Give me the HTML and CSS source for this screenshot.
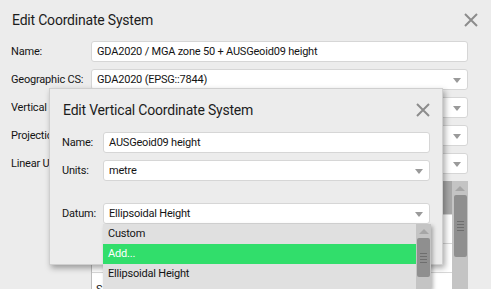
FILE: index.html
```html
<!DOCTYPE html>
<html lang="en">
<head>
    <meta charset="UTF-8">
    <title>Edit Coordinate System</title>
    <link rel="stylesheet" href="styles.css">
</head>
<body>
    <div class="dialog">
        <div class="dlg-head">
            <span class="dlg-title">Edit Coordinate System</span>
            <svg class="close" width="14" height="14" viewBox="0 0 14 14"><path d="M1 1L13 13M13 1L1 13"/></svg>
        </div>
        <div class="form">
            <div class="row"><label>Name:</label><div class="field">GDA2020 / MGA zone 50 + AUSGeoid09 height</div></div>
            <div class="row"><label>Geographic CS:</label><div class="field combo">GDA2020 (EPSG::7844)<span class="arrow"></span></div></div>
            <div class="row"><label class="covered">Vertical CS:</label><div class="field combo"><span class="arrow"></span></div></div>
            <div class="row"><label class="covered">Projection:</label><div class="field combo"><span class="arrow"></span></div></div>
            <div class="row"><label class="covered">Linear Units:</label><div class="field combo"><span class="arrow"></span></div></div>
        </div>
        <div class="listbox">
            <div class="list-rows">
                <div class="lrow sel"></div>
                <div class="lrow"></div>
                <div class="lrow"></div>
                <div class="lrow">S</div>
            </div>
            <div class="vscroll big">
                <span class="up"></span>
                <div class="thumb"><i></i><i></i><i></i><i></i></div>
            </div>
        </div>
    </div>

    <div class="dialog inner">
        <div class="dlg-head">
            <span class="dlg-title">Edit Vertical Coordinate System</span>
            <svg class="close" width="14" height="14" viewBox="0 0 14 14"><path d="M1 1L13 13M13 1L1 13"/></svg>
        </div>
        <div class="form">
            <div class="row"><label>Name:</label><div class="field">AUSGeoid09 height</div></div>
            <div class="row"><label>Units:</label><div class="field combo">metre<span class="arrow"></span></div></div>
            <div class="row datum"><label>Datum:</label><div class="field combo">Ellipsoidal Height<span class="arrow"></span></div></div>
        </div>
    </div>

    <div class="popup">
        <div class="items">
            <div class="item">Custom</div>
            <div class="item hi">Add...</div>
            <div class="item">Ellipsoidal Height</div>
        </div>
        <div class="vscroll">
            <span class="up"></span>
            <div class="thumb"><i></i><i></i><i></i><i></i></div>
        </div>
    </div>
</body>
</html>
```

FILE: styles.css
```css
body {
    margin: 0;
    background-color: #ececec;
    font-family: Roboto, "Noto Sans", sans-serif;
    font-size: 11px;
    letter-spacing: -0.2px;
    color: #141414;
    overflow: hidden;
    height: 289px;
    position: relative;
}
.dialog {
    padding: 0 23px 0 11px;
}
.dlg-head {
    display: flex;
    align-items: center;
    justify-content: space-between;
    height: 40px;
}
.dlg-title {
    font-size: 14px;
    letter-spacing: -0.2px;
    padding-left: 1px;
    color: #1c1c1c;
}
.close {
    margin-right: -10px;
}
.close path {
    stroke: #8c8c8c;
    stroke-width: 2;
    fill: none;
}
.form {
    display: flex;
    flex-direction: column;
    gap: 7px;
    margin-top: 1px;
}
.row {
    display: flex;
    align-items: center;
    height: 21px;
}
.row label {
    width: 80px;
    flex: none;
    white-space: nowrap;
}
.row label.covered {
    width: 38px;
    margin-right: 42px;
    overflow: hidden;
}
.field {
    flex: 1;
    height: 19px;
    line-height: 19px;
    background: #fff;
    border: 1px solid #d6d6d6;
    border-radius: 3px;
    padding-left: 5px;
    position: relative;
    white-space: nowrap;
}
.arrow {
    position: absolute;
    right: 6px;
    top: 8px;
    border-left: 4px solid transparent;
    border-right: 4px solid transparent;
    border-top: 5px solid #9a9a9a;
}
.listbox {
    display: flex;
    margin: 7px 0 0 80px;
    height: 108px;
    background: #fff;
    border-left: 1px solid #bdbdbd;
}
.list-rows {
    flex: 1;
}
.lrow {
    height: 29px;
    border-bottom: 1px solid #d8d8d8;
    padding: 10px 0 0 4px;
    box-sizing: border-box;
}
.lrow.sel {
    height: 34px;
    background: #a8a8a8;
}
.lrow:last-child {
    height: 15px;
    border-bottom: none;
}
.vscroll {
    width: 16px;
    background: #c4c4c4;
    display: flex;
    flex-direction: column;
    align-items: center;
}
.up {
    margin-top: 5px;
    border-left: 5px solid transparent;
    border-right: 5px solid transparent;
    border-bottom: 5px solid #a6a6a6;
}
.thumb {
    width: 13px;
    background: #8f8f8f;
    border-radius: 2px;
    margin-top: 4px;
    display: flex;
    flex-direction: column;
    align-items: center;
    justify-content: center;
    gap: 2px;
}
.vscroll.big .thumb {
    height: 62px;
}
.thumb i {
    width: 7px;
    height: 1px;
    background: #6e6e6e;
}
.inner {
    position: absolute;
    left: 49px;
    top: 88px;
    width: 394px;
    height: 177px;
    box-sizing: border-box;
    padding: 0 12px 0 12px;
    background: #ececec;
    border: 1px solid #cfcfcf;
    box-shadow: 2px 3px 6px rgba(0, 0, 0, 0.35);
}
.inner .dlg-head {
    height: 42px;
}
.inner .close {
    margin-right: 0;
}
.inner .form {
    margin-top: 1px;
}
.inner .row label {
    width: 41px;
}
.inner .row.datum {
    margin-top: 15px;
}
.popup {
    position: absolute;
    left: 103px;
    top: 224px;
    width: 328px;
    height: 65px;
    display: flex;
    background: #e0e0e0;
    box-shadow: 2px 2px 4px rgba(0, 0, 0, 0.3);
}
.items {
    flex: 1;
}
.item {
    height: 20px;
    line-height: 20px;
    padding-left: 5px;
}
.item.hi {
    background: #31de6b;
    color: #fff;
}
.popup .vscroll {
    width: 15px;
}
.popup .thumb {
    height: 39px;
}
```
